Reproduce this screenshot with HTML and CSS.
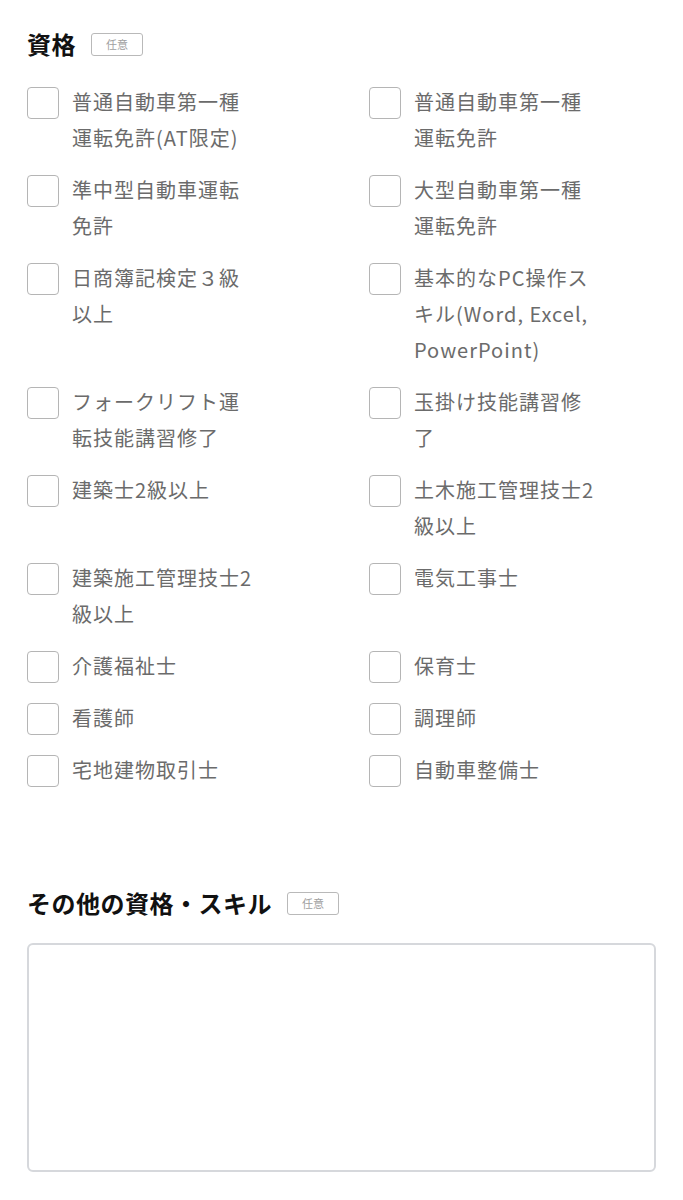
FILE: index.html
```html
<!DOCTYPE html>
<html lang="ja">
<head>
    <meta charset="UTF-8">
    <meta name="viewport" content="width=device-width, initial-scale=1.0">
    <title>資格・スキル</title>
    <link rel="stylesheet" href="styles.css">
</head>
<body>
    <div class="form-section">
        <h2 class="field-title">資格<span class="optional">任意</span></h2>
        <div class="check-list">
            <label class="check-item"><input type="checkbox"><span>普通自動車第一種運転免許(AT限定)</span></label>
            <label class="check-item"><input type="checkbox"><span>普通自動車第一種運転免許</span></label>
            <label class="check-item"><input type="checkbox"><span>準中型自動車運転免許</span></label>
            <label class="check-item"><input type="checkbox"><span>大型自動車第一種運転免許</span></label>
            <label class="check-item"><input type="checkbox"><span>日商簿記検定３級以上</span></label>
            <label class="check-item"><input type="checkbox"><span>基本的なPC操作スキル(Word, Excel, PowerPoint)</span></label>
            <label class="check-item"><input type="checkbox"><span>フォークリフト運転技能講習修了</span></label>
            <label class="check-item"><input type="checkbox"><span>玉掛け技能講習修了</span></label>
            <label class="check-item"><input type="checkbox"><span>建築士2級以上</span></label>
            <label class="check-item"><input type="checkbox"><span>土木施工管理技士2級以上</span></label>
            <label class="check-item"><input type="checkbox"><span>建築施工管理技士2級以上</span></label>
            <label class="check-item"><input type="checkbox"><span>電気工事士</span></label>
            <label class="check-item"><input type="checkbox"><span>介護福祉士</span></label>
            <label class="check-item"><input type="checkbox"><span>保育士</span></label>
            <label class="check-item"><input type="checkbox"><span>看護師</span></label>
            <label class="check-item"><input type="checkbox"><span>調理師</span></label>
            <label class="check-item"><input type="checkbox"><span>宅地建物取引士</span></label>
            <label class="check-item"><input type="checkbox"><span>自動車整備士</span></label>
        </div>
    </div>

    <div class="form-section other">
        <h2 class="field-title">その他の資格・スキル<span class="optional">任意</span></h2>
        <textarea class="other-text"></textarea>
    </div>

    <!-- 次へボタン（画面外） -->
    <div class="next-area">
        <div class="next-button"></div>
    </div>
</body>
</html>
```

FILE: styles.css
```css
body {
    font-family: "Noto Sans CJK JP", "Noto Sans", sans-serif;
    margin: 0;
    padding: 26px 27px 0;
    background: #fff;
    color: #6b6b6b;
}
.field-title {
    display: flex;
    align-items: center;
    margin: 0;
    font-size: 24px;
    line-height: 36px;
    font-weight: bold;
    letter-spacing: 0.5px;
    color: #111;
}
.optional {
    display: inline-flex;
    align-items: center;
    justify-content: center;
    width: 52px;
    height: 23px;
    box-sizing: border-box;
    margin-left: 15px;
    border: 1.5px solid #b9b9b9;
    border-radius: 3px;
    font-size: 11px;
    font-weight: normal;
    letter-spacing: 0;
    color: #a0a0a0;
}
.check-list {
    display: grid;
    grid-template-columns: 342px 1fr;
    row-gap: 16px;
    margin-top: 22px;
}
.check-item {
    display: flex;
    align-items: flex-start;
    gap: 13px;
    cursor: pointer;
}
.check-item input {
    appearance: none;
    -webkit-appearance: none;
    flex: none;
    width: 32px;
    height: 32px;
    margin: 3px 0 0;
    box-sizing: border-box;
    border: 1.5px solid #b5b5b5;
    border-radius: 4px;
    background: #fff;
}
.check-item span {
    width: 186px;
    font-size: 20px;
    line-height: 36px;
    letter-spacing: 1px;
    color: #6b6b6b;
}
.other {
    margin-top: 97px;
}
.other-text {
    display: block;
    width: 100%;
    height: 229px;
    box-sizing: border-box;
    margin-top: 22px;
    border: 2px solid #d6d8dc;
    border-radius: 6px;
    resize: none;
    font-family: inherit;
}
.next-area {
    display: flex;
    justify-content: center;
    margin-top: 56px;
    padding-bottom: 40px;
}
.next-button {
    width: 380px;
    height: 60px;
    border-radius: 30px;
    background: #fff;
    box-shadow: 0 0 34px rgba(0, 0, 0, 0.06);
}
```
